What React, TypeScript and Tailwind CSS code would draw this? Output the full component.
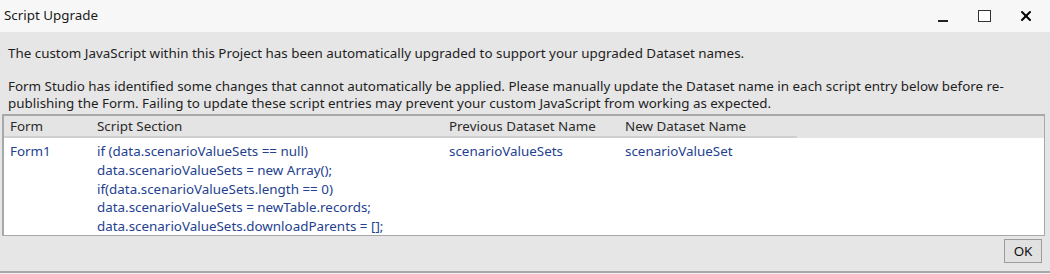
import { X } from 'lucide-react';

const scriptLines = [
    'if (data.scenarioValueSets == null)',
    'data.scenarioValueSets = new Array();',
    'if(data.scenarioValueSets.length == 0)',
    'data.scenarioValueSets = newTable.records;',
    'data.scenarioValueSets.downloadParents = [];',
];

export default function App() {
    return (
        <div className="w-[1050px] h-[274px] flex flex-col bg-[#e6e6e6] text-[13.4px] text-[#1e1e1e]" style={{ fontFamily: '"Noto Sans", "Open Sans", sans-serif' }}>
            {/* Title bar */}
            <div className="h-[32px] flex items-center bg-[#f7f7f7] pl-[4px]">
                <span className="flex-1 text-[#1a1a1a] -mt-[1px]">Script Upgrade</span>
                <div className="flex items-center h-full">
                    <div className="w-[46px] h-full flex items-center justify-center">
                        <div className="w-[10px] h-[2px] bg-[#222] mt-[9px]" />
                    </div>
                    <div className="w-[36px] h-full flex items-center justify-center">
                        <div className="w-[13px] h-[12px] border-[1.5px] border-[#333] bg-white" />
                    </div>
                    <div className="w-[48px] h-full flex items-center justify-center">
                        <X size={16} strokeWidth={3} className="text-black" />
                    </div>
                </div>
            </div>

            {/* Body */}
            <div className="flex-1 flex flex-col pt-[12px] px-[2px]">
                <p className="px-[6px] leading-[19px]">
                    The custom JavaScript within this Project has been automatically upgraded to support your upgraded Dataset names.
                </p>
                <p className="px-[6px] mt-[15px] leading-[16.5px]">
                    Form Studio has identified some changes that cannot automatically be applied. Please manually update the Dataset name in each script entry below before re-publishing the Form. Failing to update these script entries may prevent your custom JavaScript from working as expected.
                </p>

                {/* Table */}
                <div className="mt-[3px] mr-[3px] h-[122px] border-l-2 border-t-2 border-r border-b border-[#a8a8a8] bg-white flex flex-col">
                    <div className="h-[23px] bg-[#e4e4e4] flex">
                        <div className="w-[793px] flex items-center border-b-2 border-[#cfcfcf] text-[#2a2a2a]">
                            <span className="w-[86px] pl-[6px]">Form</span>
                            <span className="w-[352px] pl-[7px]">Script Section</span>
                            <span className="w-[176px] pl-[7px]">Previous Dataset Name</span>
                            <span className="pl-[7px]">New Dataset Name</span>
                        </div>
                    </div>
                    <div className="flex text-[#243f8f] pt-[4px]">
                        <span className="w-[86px] pl-[6px] leading-[18.7px]">Form1</span>
                        <div className="w-[352px] pl-[7px] flex flex-col leading-[18.7px]">
                            {scriptLines.map((line) => (
                                <span key={line}>{line}</span>
                            ))}
                        </div>
                        <span className="w-[176px] pl-[7px] leading-[18.7px]">scenarioValueSets</span>
                        <span className="pl-[7px] leading-[18.7px]">scenarioValueSet</span>
                    </div>
                </div>

                <div className="flex justify-end pt-[3px] pr-[6px]">
                    <button className="w-[38px] h-[24px] border border-[#9c9c9c] bg-[#e1e1e1] text-[#111] flex items-center justify-center">
                        OK
                    </button>
                </div>
            </div>
            <div className="h-[3px] border-t-2 border-[#a8a8a8] bg-[#f0f0f0]" />
        </div>
    );
}
